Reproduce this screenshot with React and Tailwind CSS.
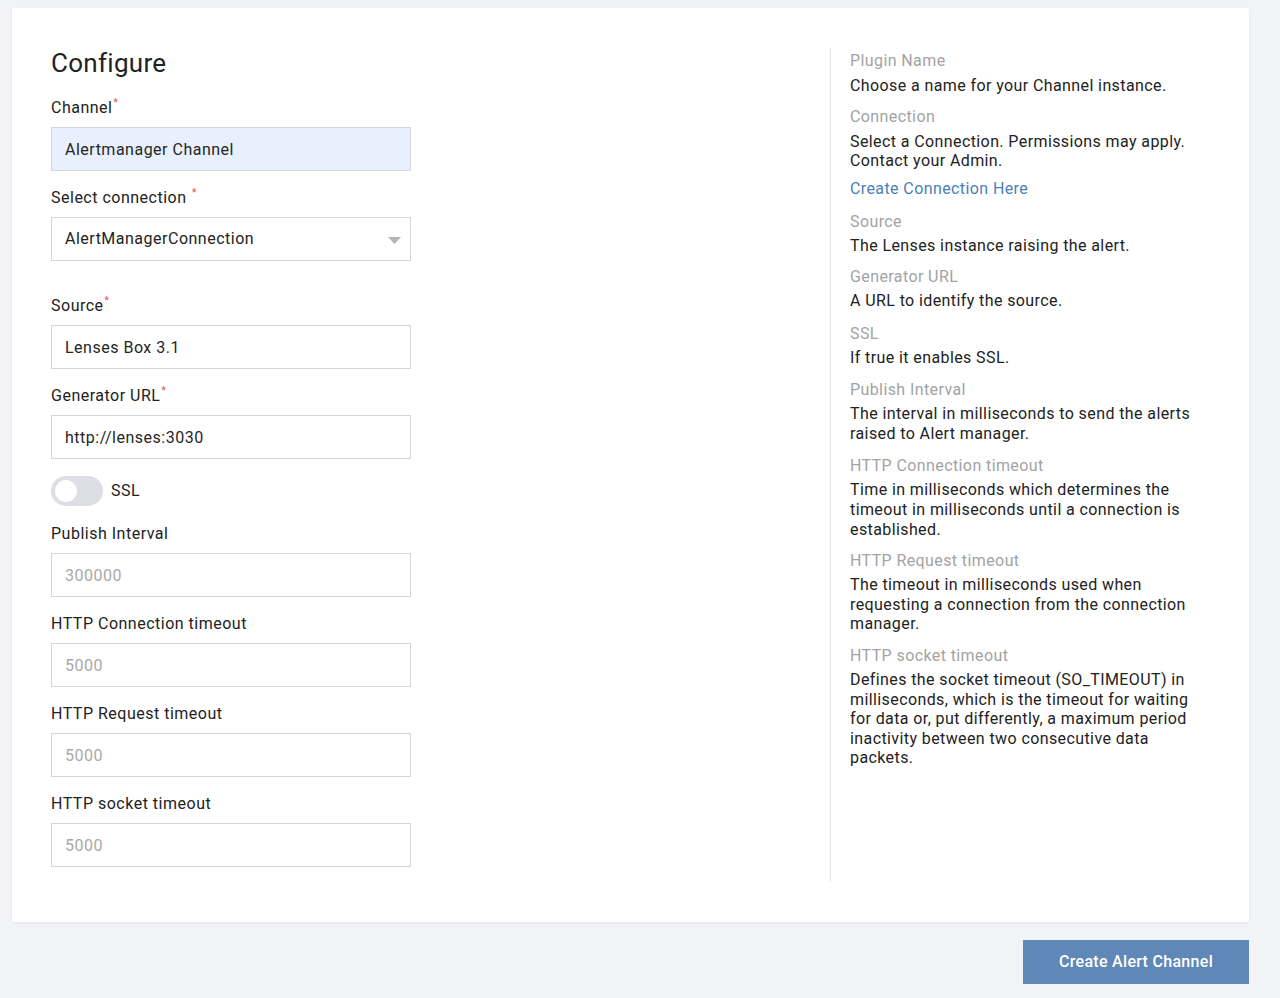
const fields = [
  { label: "Source", required: true, value: "Lenses Box 3.1" },
  { label: "Generator URL", required: true, value: "http://lenses:3030" },
];

const timeouts = [
  { label: "Publish Interval", placeholder: "300000" },
  { label: "HTTP Connection timeout", placeholder: "5000" },
  { label: "HTTP Request timeout", placeholder: "5000" },
  { label: "HTTP socket timeout", placeholder: "5000" },
];

const help = [
  { title: "Source", gap: "mt-[13px]", text: "The Lenses instance raising the alert." },
  { title: "Generator URL", gap: "mt-[12px]", text: "A URL to identify the source." },
  { title: "SSL", gap: "mt-[13px]", text: "If true it enables SSL." },
  {
    title: "Publish Interval",
    gap: "mt-[13px]",
    text: "The interval in milliseconds to send the alerts raised to Alert manager.",
  },
  {
    title: "HTTP Connection timeout",
    gap: "mt-[13px]",
    text: "Time in milliseconds which determines the timeout in milliseconds until a connection is established.",
  },
  {
    title: "HTTP Request timeout",
    gap: "mt-[12px]",
    text: "The timeout in milliseconds used when requesting a connection from the connection manager.",
  },
  {
    title: "HTTP socket timeout",
    gap: "mt-[12px]",
    text: "Defines the socket timeout (SO_TIMEOUT) in milliseconds, which is the timeout for waiting for data or, put differently, a maximum period inactivity between two consecutive data packets.",
  },
];

const Star = () => (
  <span className="relative -top-[7px] ml-[1px] text-[10px] text-[#e5484d]">*</span>
);

const Label = ({ children, required }) => (
  <label className="block h-5 text-[16px] leading-[22px] text-[#222]">
    {children}
    {required && <Star />}
  </label>
);

const Input = ({ value, placeholder, className = "bg-white" }) => (
  <input
    readOnly
    value={value}
    placeholder={placeholder}
    className={`mt-[10px] block h-[44px] w-full border border-[#d6d6d6] px-[13px] text-[16px] tracking-[0.5px] text-[#262626] placeholder:text-[#a9a9a9] outline-none ${className}`}
  />
);

export default function App() {
  return (
    <div className="min-h-[998px] bg-[#f2f3f6] px-[12px] pt-[8px] font-['Roboto',sans-serif] tracking-[0.5px] text-[#222]">
      <div className="flex w-[1237px] bg-white px-[39px] py-[40px] shadow-[0_1px_3px_rgba(0,0,0,0.06)]">
        <div className="w-[360px] pb-[15px]">
          <h1 className="text-[26px] leading-[30px] tracking-[0.3px] text-[#222]">Configure</h1>

          <div className="mt-[19px]">
            <Label required>Channel</Label>
            <Input value="Alertmanager Channel" className="bg-[#e8f0fe] border-[#cdd5e0]" />
          </div>

          <div className="mt-[16px]">
            <Label required>Select connection </Label>
            <div className="relative mt-[10px] flex h-[44px] items-center border border-[#d6d6d6] bg-white px-[13px] text-[16px]">
              AlertManagerConnection
              <svg className="absolute right-[9px] top-[19px]" width="13" height="7" viewBox="0 0 13 7">
                <path d="M0 0h13L6.5 7z" fill="#b4b4b4" />
              </svg>
            </div>
          </div>

          {fields.map((f, i) => (
            <div key={f.label} className={i === 0 ? "mt-[34px]" : "mt-[16px]"}>
              <Label required={f.required}>{f.label}</Label>
              <Input value={f.value} />
            </div>
          ))}

          <div className="mt-[17px] flex h-[30px] items-center">
            <div className="flex h-[30px] w-[52px] items-center rounded-full bg-[#dcdee3] px-[4px]">
              <div className="h-[22px] w-[22px] rounded-full bg-white" />
            </div>
            <span className="ml-[8px] text-[16px]">SSL</span>
          </div>

          {timeouts.map((f, i) => (
            <div key={f.label} className={i === 0 ? "mt-[17px]" : "mt-[16px]"}>
              <Label>{f.label}</Label>
              <Input placeholder={f.placeholder} />
            </div>
          ))}
        </div>

        <div className="ml-[419px] w-[380px] border-l border-[#e2e2e2] pl-[19px] pt-[3px]">
          <div className="w-[350px] text-[16px] tracking-[0.4px]">
            <div className="leading-5 text-[#a3a3a3]">Plugin Name</div>
            <div className="mt-[5px] leading-[19.5px]">Choose a name for your Channel instance.</div>

            <div className="mt-[11px] leading-5 text-[#a3a3a3]">Connection</div>
            <div className="mt-[5px] leading-[19.5px]">
              Select a Connection. Permissions may apply. Contact your Admin.
            </div>
            <div className="mt-[8px] leading-5 text-[#4a7fba]">Create Connection Here</div>

            {help.map((h) => (
              <div key={h.title} className={h.gap}>
                <div className="leading-5 text-[#a3a3a3]">{h.title}</div>
                <div className="mt-[4px] leading-[19.6px]">{h.text}</div>
              </div>
            ))}
          </div>
        </div>
      </div>

      <div className="flex w-[1237px] justify-end pt-[18px]">
        <button className="h-[44px] w-[226px] bg-[#5f87b7] text-[16px] font-medium tracking-[0.3px] text-white">
          Create Alert Channel
        </button>
      </div>
    </div>
  );
}
